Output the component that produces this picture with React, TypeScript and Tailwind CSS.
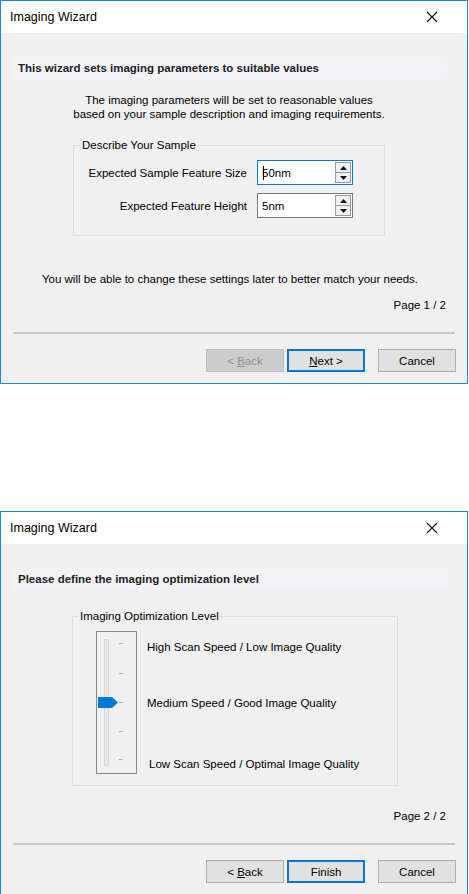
import React from "react"

function CloseIcon() {
  return (
    <svg width="12" height="12" viewBox="0 0 12 12" className="block">
      <path d="M1 1 L11 11 M11 1 L1 11" stroke="#111" strokeWidth="1.1" fill="none" />
    </svg>
  )
}

function Arrow({ down }: { down?: boolean }) {
  return (
    <svg width="7" height="4" viewBox="0 0 7 4" className="block">
      <path d={down ? "M0 0 L7 0 L3.5 4 Z" : "M3.5 0 L7 4 L0 4 Z"} fill="#111" />
    </svg>
  )
}

function SpinBox({ value, focused }: { value: string; focused?: boolean }) {
  return (
    <div
      className={`flex h-[25px] w-[96px] items-center border bg-white pl-[4px] pr-[1px] ${
        focused ? "border-[#0078d7]" : "border-[#7a7a7a]"
      }`}
    >
      <div className="relative flex-1 text-[11.5px] leading-[14px] text-black">
        {focused && <span className="absolute left-[1px] top-0 h-[14px] w-px bg-black" />}
        {value}
      </div>
      <div className="flex h-[21px] w-[16px] flex-col border border-[#9a9a9a] bg-[#e8e8e8]">
        <div className="flex flex-1 items-center justify-center border-b border-[#9a9a9a] bg-[#f0f0f0]">
          <Arrow />
        </div>
        <div className="flex flex-1 items-center justify-center bg-[#f0f0f0]">
          <Arrow down />
        </div>
      </div>
    </div>
  )
}

function Btn({
  children,
  disabled,
  primary,
}: {
  children: React.ReactNode
  disabled?: boolean
  primary?: boolean
}) {
  let cls = "border border-[#adadad] bg-[#e1e1e1] text-black"
  if (disabled) cls = "border border-[#bfbfbf] bg-[#cccccc] text-[#8f8f8f]"
  if (primary) cls = "border-2 border-[#0078d7] bg-[#e1e1e1] text-black"
  return (
    <div className={`flex h-[23px] w-[78px] items-center justify-center text-[11.5px] leading-[14px] ${cls}`}>
      <span>{children}</span>
    </div>
  )
}

function Dialog({
  heading,
  page,
  children,
  buttons,
}: {
  heading: string
  page: string
  children: React.ReactNode
  buttons: React.ReactNode
}) {
  return (
    <div className="flex h-[384px] w-[468px] flex-col border border-[#1c86d8] bg-[#f0f0f0]">
      {/* title bar */}
      <div className="flex h-[32px] shrink-0 items-center justify-between bg-white pl-[9px] pr-[29px]">
        <span className="text-[12.5px] leading-[14px] text-black">Imaging Wizard</span>
        <CloseIcon />
      </div>

      <div className="flex flex-1 flex-col">
        <div className="ml-[12px] mt-[24px] flex h-[22px] w-[434px] items-center bg-[#f3f3f7] pl-[5px]">
          <span className="text-[11.5px] font-bold leading-[14px] text-[#222]">{heading}</span>
        </div>

        {children}

        {/* footer */}
        <div className="mt-auto flex flex-col pb-[11px]">
          <div className="pr-[21px] text-right text-[11.5px] leading-[14px] text-black">{page}</div>
          <div className="mx-[12px] mt-[20px] h-[2px] bg-[#c8c8c8]" />
          <div className="mr-[11px] mt-[15px] flex justify-end">
            {buttons}
          </div>
        </div>
      </div>
    </div>
  )
}

function SliderGraphic() {
  const ticks = [12, 42, 71, 100, 128]
  return (
    <svg width="41" height="143" viewBox="0 0 41 143" className="block shrink-0">
      <rect x="0.5" y="0.5" width="40" height="142" fill="none" stroke="#222" strokeDasharray="1 1" />
      <rect x="8.5" y="8.5" width="4" height="126" fill="#e7e7e7" stroke="#d6d6d6" />
      {ticks.map((t) => (
        <line key={t} x1="23" x2="27" y1={t + 0.5} y2={t + 0.5} stroke="#b4b4b4" />
      ))}
      <path d="M2 66 L16 66 L22 71.5 L16 77 L2 77 Z" fill="#0078d7" />
    </svg>
  )
}

export default function App() {
  return (
    <div className="h-[894px] w-[469px] overflow-hidden bg-white font-['Segoe_UI','Liberation_Sans',sans-serif] text-black">
      <Dialog
        heading="This wizard sets imaging parameters to suitable values"
        page="Page 1 / 2"
        buttons={
          <>
            <Btn disabled>
              &lt; <span className="underline">B</span>ack
            </Btn>
            <div className="ml-[3px]">
              <Btn primary>
                <span className="underline">N</span>ext &gt;
              </Btn>
            </div>
            <div className="ml-[13px]">
              <Btn>Cancel</Btn>
            </div>
          </>
        }
      >
        <div className="mt-[14px] w-[456px] text-center text-[11.5px] leading-[14px]">
          <p>The imaging parameters will be set to reasonable values</p>
          <p>based on your sample description and imaging requirements.</p>
        </div>

        <fieldset className="ml-[72px] mt-[17px] w-[312px] border border-[#dcdcdc] pb-[17px]">
          <legend className="ml-[6px] px-[2px] text-[11.5px] leading-[14px]">Describe Your Sample</legend>
          <div className="mt-[8px] grid grid-cols-[173px_96px] items-center gap-x-[10px] gap-y-[8px]">
            <span className="text-right text-[11.5px] leading-[14px]">Expected Sample Feature Size</span>
            <SpinBox value="50nm" focused />
            <span className="text-right text-[11.5px] leading-[14px]">Expected Feature Height</span>
            <SpinBox value="5nm" />
          </div>
        </fieldset>

        <p className="mt-[36px] w-[458px] text-center text-[11.5px] leading-[14px]">
          You will be able to change these settings later to better match your needs.
        </p>
      </Dialog>

      <div className="mt-[127px]">
        <Dialog
          heading="Please define the imaging optimization level"
          page="Page 2 / 2"
          buttons={
            <>
              <Btn>
                &lt; <span className="underline">B</span>ack
              </Btn>
              <div className="ml-[3px]">
                <Btn primary>Finish</Btn>
              </div>
              <div className="ml-[13px]">
                <Btn>Cancel</Btn>
              </div>
            </>
          }
        >
          <fieldset className="ml-[71px] mt-[19px] w-[326px] border border-[#dcdcdc] pb-[11px]">
            <legend className="ml-[5px] px-[2px] text-[11.5px] leading-[14px]">Imaging Optimization Level</legend>
            <div className="ml-[23px] mt-[8px] flex">
              <SliderGraphic />
              <div className="ml-[10px] flex flex-col pt-[9px] text-[11.5px] leading-[14px]">
                <span>High Scan Speed / Low Image Quality</span>
                <span className="mt-[42px]">Medium Speed / Good Image Quality</span>
                <span className="ml-[2px] mt-[47px]">Low Scan Speed / Optimal Image Quality</span>
              </div>
            </div>
          </fieldset>
        </Dialog>
      </div>
    </div>
  )
}
